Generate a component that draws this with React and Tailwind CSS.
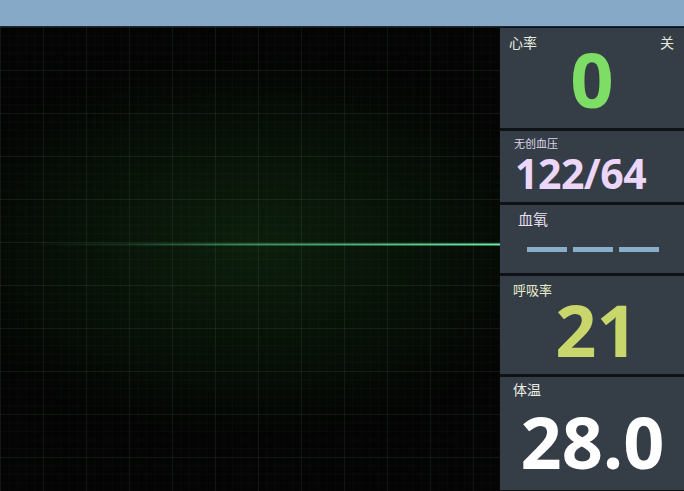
import React from "react";

const cjk = "font-['Noto_Sans_CJK_SC','Noto_Sans',sans-serif]";
const num = "font-['Open_Sans','Noto_Sans',sans-serif]";

function Panel({ className, children }) {
  return <div className={`bg-[#353e47] flex flex-col ${className}`}>{children}</div>;
}

function Trace() {
  return (
    <svg className="w-full h-full" viewBox="0 0 500 463" preserveAspectRatio="none">
      <defs>
        <linearGradient id="tr" x1="0" x2="1" y1="0" y2="0">
          <stop offset="0" stopColor="#5be09a" stopOpacity="0" />
          <stop offset="0.2" stopColor="#5be09a" stopOpacity="0.15" />
          <stop offset="0.45" stopColor="#5be09a" stopOpacity="0.55" />
          <stop offset="1" stopColor="#6af0a8" stopOpacity="1" />
        </linearGradient>
      </defs>
      <rect x="30" y="216" width="470" height="2" fill="url(#tr)" />
    </svg>
  );
}

export default function App() {
  return (
    <div className="w-[684px] h-[491px] overflow-hidden flex flex-col bg-black">
      <div className="h-[27px] bg-[#86a9c8] border-b border-[#1c2a38] shrink-0" />
      <div className="flex flex-1 min-h-0">
        <div className="w-[500px] h-full bg-[#030403] bg-[linear-gradient(90deg,rgba(110,140,110,0.1)_1px,transparent_1px),linear-gradient(rgba(110,140,110,0.1)_1px,transparent_1px),linear-gradient(90deg,rgba(90,120,90,0.05)_1px,transparent_1px),linear-gradient(rgba(90,120,90,0.05)_1px,transparent_1px),radial-gradient(ellipse_70%_45%_at_50%_47%,#0c1e0c_0%,#071107_50%,#030403_90%)] bg-[size:43px_43px,43px_43px,8.6px_8.6px,8.6px_8.6px,100%_100%]">
          <Trace />
        </div>
        <div className="flex-1 flex flex-col gap-[3px] pt-px bg-[#101316]">
          <Panel className="h-[100px] px-[9px] pt-[7px]">
            <div className={`flex justify-between text-[14px] leading-[14px] text-[#e3e9dc] ${cjk}`}>
              <span>心率</span>
              <span className="pr-px">关</span>
            </div>
            <div className={`text-center text-[76px] leading-none font-bold text-[#7ddd64] -mt-[8px] ${num}`}>0</div>
          </Panel>
          <Panel className="h-[71px] pl-[14px] pt-[7px]">
            <div className={`text-[11px] leading-[11px] text-[#ddd6ea] ${cjk}`}>无创血压</div>
            <div className={`text-[41px] leading-none font-bold text-[#ecd7fa] mt-[4px] pl-[1px] tracking-[-0.5px] ${num}`}>122/64</div>
          </Panel>
          <Panel className="h-[68px] pl-[18px] pt-[6px]">
            <div className={`text-[15px] leading-[15px] text-[#e8def0] ${cjk}`}>血氧</div>
            <div className="flex gap-[6px] pl-[9px] mt-[21px]">
              <div className="w-[40px] h-[5px] bg-[#8aaec9]" />
              <div className="w-[40px] h-[5px] bg-[#8aaec9]" />
              <div className="w-[40px] h-[5px] bg-[#8aaec9]" />
            </div>
          </Panel>
          <Panel className="h-[98px] pl-[13px] pt-[7px]">
            <div className={`text-[13px] leading-[13px] text-[#e6eacb] ${cjk}`}>呼吸率</div>
            <div className={`text-center text-[72px] leading-none font-bold text-[#c8d66b] -mt-[3px] pr-[4px] ${num}`}>21</div>
          </Panel>
          <Panel className="h-[113px] pl-[13px] pt-[5px]">
            <div className={`text-[14px] leading-[14px] text-[#ebebe3] ${cjk}`}>体温</div>
            <div className={`text-center text-[72px] leading-none font-bold text-white mt-[9px] pr-[12px] ${num}`}>28.0</div>
          </Panel>
        </div>
      </div>
    </div>
  );
}
